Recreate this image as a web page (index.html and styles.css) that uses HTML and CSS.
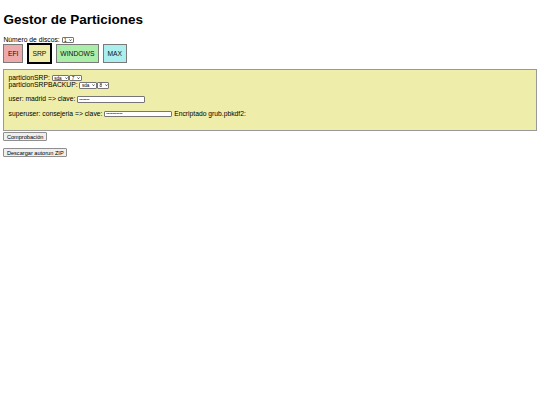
FILE: index.html
```html
<!DOCTYPE html>
<html lang="es">
<head>
<meta charset="utf-8">
<title>Gestor de Particiones</title>
<link rel="stylesheet" href="styles.css">
</head>
<body>
<h1 class="title">Gestor de Particiones</h1>
<div class="disks">Número de discos: <span class="sel"><select class="ctl"><option>1</option></select><svg class="chev" viewBox="0 0 4 3"><polyline points="0.5,0.6 2,2.2 3.5,0.6"/></svg></span></div>
<div class="parts">
  <div class="part efi">EFI</div>
  <div class="part srp selected">SRP</div>
  <div class="part windows">WINDOWS</div>
  <div class="part max">MAX</div>
</div>
<div class="panel">
  <div class="row">particionSRP: <span class="sel"><select class="ctl"><option>sda</option></select><svg class="chev" viewBox="0 0 4 3"><polyline points="0.5,0.6 2,2.2 3.5,0.6"/></svg></span><span class="sel"><select class="ctl"><option>7</option></select><svg class="chev" viewBox="0 0 4 3"><polyline points="0.5,0.6 2,2.2 3.5,0.6"/></svg></span><br>particionSRPBACKUP: <span class="sel"><select class="ctl"><option>sda</option></select><svg class="chev" viewBox="0 0 4 3"><polyline points="0.5,0.6 2,2.2 3.5,0.6"/></svg></span><span class="sel"><select class="ctl"><option>8</option></select><svg class="chev" viewBox="0 0 4 3"><polyline points="0.5,0.6 2,2.2 3.5,0.6"/></svg></span></div>
  <p class="line">user: madrid =&gt; clave: <input class="pass" type="password" value="1234567"></p>
  <p class="line">superuser: consejeria =&gt; clave: <input class="pass" type="password" value="12345678901"> Encriptado grub.pbkdf2:</p>
</div>
<button class="btn first">Comprobación</button>
<p class="line"><button class="btn">Descargar autorun ZIP</button></p>
</body>
</html>
```
FILE: styles.css
```css
html {
  background: #fff;
}
body {
  margin: 3.4px;
  font-family: Arial, "Liberation Sans", sans-serif;
  font-size: 6.75px;
  color: #000;
}
.title {
  font-size: 13.5px;
  font-weight: bold;
  margin: 8.3px 0 9px;
}
.sel {
  position: relative;
  display: inline-block;
  vertical-align: middle;
  line-height: 0;
}
.sel select {
  -webkit-appearance: none;
  appearance: none;
  font-family: Arial, "Liberation Sans", sans-serif;
  font-size: 4.6px;
  height: 6.6px;
  line-height: normal;
  margin: 0;
  padding: 0 6px 0 1.5px;
  border: 1px solid #767676;
  border-radius: 1px;
  background: #fff;
  color: #000;
  vertical-align: top;
}
.chev {
  position: absolute;
  right: 1.6px;
  top: 2.1px;
  width: 3px;
  height: 2.3px;
  fill: none;
  stroke: #000;
  stroke-width: 0.9;
  pointer-events: none;
}
.parts {
  display: flex;
  gap: 4px;
  align-items: center;
}
.part {
  padding: 5px 3.5px;
  border: 1px solid #7a7a7a;
  color: #111;
}
.part.selected {
  border: 2px solid #000;
}
.efi { background: #eeaaaa; }
.srp { background: #eeeeaa; }
.windows { background: #aaeeaa; }
.max { background: #aaeeee; }
.panel {
  margin-top: 5px;
  background: #eeeeaa;
  border: 1px solid #999;
  padding: 3.4px 4.2px 6.4px;
}
.line {
  margin: 6.75px 0;
}
.pass {
  box-sizing: border-box;
  width: 68px;
  height: 6.8px;
  padding: 0 1px;
  margin: 0;
  border: 1px solid #767676;
  border-radius: 1px;
  font-family: Arial, "Liberation Sans", sans-serif;
  font-size: 4.2px;
  color: #000;
  background: #fff;
  vertical-align: middle;
}
.btn {
  font-family: Arial, "Liberation Sans", sans-serif;
  font-size: 5.625px;
  color: #000;
  margin: 0;
  padding: 0.5px 2.5px;
  border: 1px solid #8f8f8f;
  border-radius: 1px;
  background: #efefef;
}
.btn.first {
  margin-top: 1px;
}
```
